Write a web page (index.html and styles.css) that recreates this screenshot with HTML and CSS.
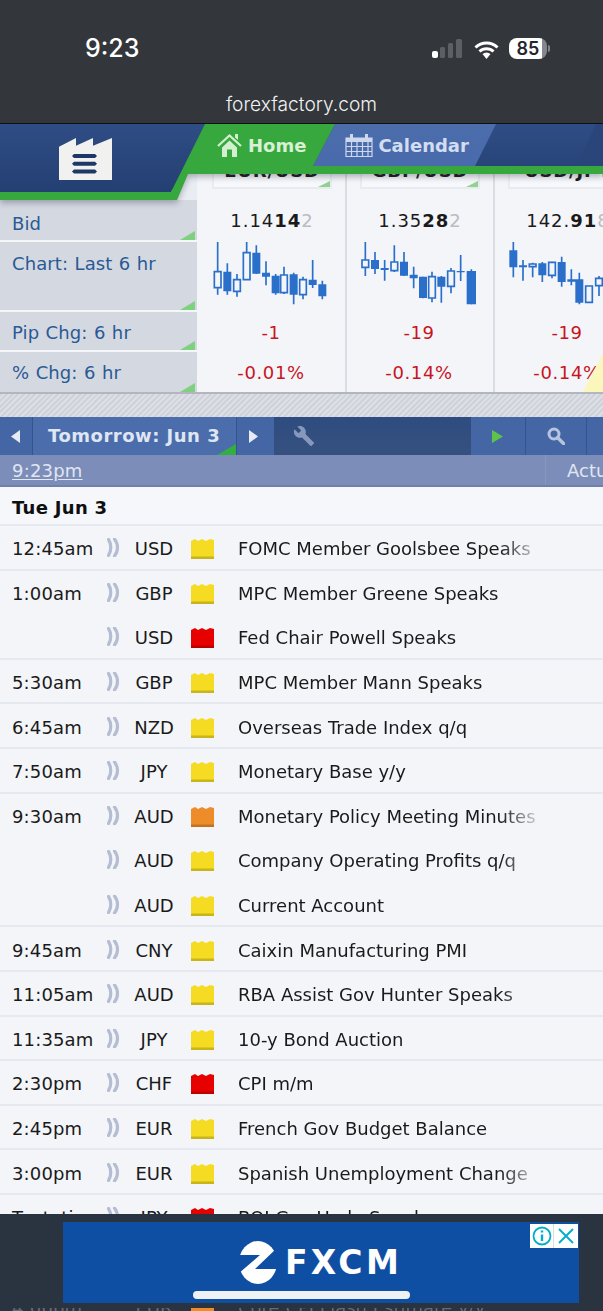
FILE: index.html
```html
<!DOCTYPE html>
<html lang="en">
<head>
<meta charset="utf-8">
<title>Forex Factory</title>
<link rel="stylesheet" href="styles.css">
</head>
<body>
<div class="page">
  <header class="browser">
    <div class="status">
      <span class="clock">9:23</span>
      <div class="status-icons">
        <svg class="signal" viewBox="0 0 30 19"><rect x="0" y="12" width="6" height="7" rx="2" fill="#fff"/><rect x="8" y="8" width="5" height="11" rx="1.5" fill="#5c5f63"/><rect x="16" y="4" width="5" height="15" rx="1.5" fill="#5c5f63"/><rect x="24" y="0" width="6" height="19" rx="1.5" fill="#5c5f63"/></svg>
        <svg class="wifi" viewBox="0 0 25 18"><path d="M1.500 6.500a15.500 15.500 0 0 1 22 0M5.500 10.500a10 10 0 0 1 14 0" fill="none" stroke="#fff" stroke-width="3"/><path d="M8.500 13a6 6 0 0 1 8 0L12.500 18z" fill="#fff"/></svg>
        <span class="battery">85</span>
      </div>
    </div>
    <div class="url">forexfactory.com</div>
  </header>

  <div class="stage">
    <nav class="nav">
      <svg class="nav-bg" viewBox="0 0 603 76">
        <defs>
          <linearGradient id="navblue" x1="0" y1="0" x2="0" y2="1"><stop offset="0" stop-color="#2f4d85"/><stop offset="1" stop-color="#243f72"/></linearGradient>
          <linearGradient id="tabblue" x1="0" y1="0" x2="0" y2="1"><stop offset="0" stop-color="#4b6dac"/><stop offset="1" stop-color="#4a6bab"/></linearGradient>
        </defs>
        <path d="M0 0H603V42H188L171 68H0Z" fill="url(#navblue)"/>
        <path d="M596 0H603V42H577Z" fill="#2a4579"/>
        <path d="M335 0H496L475 42H313Z" fill="url(#tabblue)"/>
        <path d="M205 0H335L313 42H603V50H188L177 76H0V68H171Z" fill="#36a83e"/>
      </svg>
      <div class="nav-row">
        <svg class="logo" viewBox="0 0 53 43">
          <path d="M0 9.700 17 1V8.700L34 1V8.700L53 1V43H0Z" fill="#f1f1ef"/>
          <path d="M13 19l2-2h21l2 2-2 2h-21z M13 26.700l2-2h21l2 2-2 2h-21z M13 34.500l2-2h21l2 2-2 2h-21z" fill="#1f3766"/>
        </svg>
        <a class="nav-link home">
          <svg class="ic-home" viewBox="0 0 25 23"><path d="M1 12 12.500 1.500 24 12" fill="none" stroke="#d3efd0" stroke-width="2.200"/><path d="M18 0h3v6l-3-2.500zM5 13.500 12.500 6.500 20 13.500V23H15V15.500H10V23H5Z" fill="#d3efd0"/></svg>
          Home
        </a>
        <a class="nav-link calendar">
          <svg class="ic-cal" viewBox="0 0 28 23"><path d="M1 4h26v18.500H1Z" fill="none" stroke="#cdd8ee" stroke-width="1.200"/><path d="M1 4h26v4H1ZM5 0h3v5H5ZM20 0h3v5h-3Z" fill="#cdd8ee"/><path d="M1 12.500h26M1 17.500h26M6.500 8v14M12 8v14M17.500 8v14M23 8v14" stroke="#cdd8ee" stroke-width="1.200"/></svg>
          Calendar
        </a>
      </div>
    </nav>

    <section class="markets">
      <div class="col side">
        <div class="r-head side-top"></div>
        <div class="r-bid label label-bid">Bid</div>
        <div class="r-chart label">Chart: Last 6 hr</div>
        <div class="r-pip label">Pip Chg: 6 hr</div>
        <div class="r-pct label">% Chg: 6 hr</div>
      </div>
      <div class="col cell">
        <div class="r-head"><div class="pair">EUR/USD</div></div>
        <div class="r-bid price">1.14<b>14</b><i>2</i></div>
        <div class="r-chart">
          <svg class="candles" viewBox="597 216 444 210">
            <path class="wick" d="M653 216V374M682 280V374M711 312V380M740 216V330M769 226V312M798 274V346M827 312V374M852 290V372M881 308V403M909 320V388M938 270V354M967 332V388"/>
            <path class="solid" d="M670 305h24v59h-24zM757 248h24v63h-24zM786 308h24v12h-24zM815 317h24v53h-24zM869 313h24v61h-24zM926 329h24v16h-24zM955 343h24v36h-24z"/>
            <path class="hollow" d="M643 305h20v48h-20zM701 329h20v35h-20zM730 248h20v81h-20zM842 315h20v53h-20zM899 329h20v45h-20z"/>
          </svg>
        </div>
        <div class="r-pip change">-1</div>
        <div class="r-pct change">-0.01%</div>
      </div>
      <div class="col cell">
        <div class="r-head"><div class="pair">GBP/USD</div></div>
        <div class="r-bid price">1.35<b>28</b><i>2</i></div>
        <div class="r-chart">
          <svg class="candles" viewBox="21 216 444 210">
            <path class="wick" d="M76 216V318M105 246V312M134 270V332M163 226V306M192 246V318M221 290V355M249 320V385M276 305V397M304 318V398M333 294V370M362 255V333M394 298V403"/>
            <path class="solid" d="M93 270h24v27h-24zM122 294h24v6h-24zM180 275h24v42h-24zM209 314h24v11h-24zM237 320h24v64h-24zM292 320h24v30h-24zM350 303h24v4h-24zM380 303h28v100h-28z"/>
            <path class="hollow" d="M66 270h20v22h-20zM153 276h20v26h-20zM266 320h20v64h-20zM323 303h20v46h-20z"/>
          </svg>
        </div>
        <div class="r-pip change">-19</div>
        <div class="r-pct change">-0.14%</div>
      </div>
      <div class="col cell">
        <div class="r-head"><div class="pair">USD/JPY</div></div>
        <div class="r-bid price">142.<b>91</b><i>8</i></div>
        <div class="r-chart">
          <svg class="candles" viewBox="465 216 444 210">
            <path class="wick" d="M520 216V322M549 270V332M578 278V322M607 276V336M636 275V325M665 260V350M694 298V346M718 308V403M747 348V397M777 318V378"/>
            <path class="solid" d="M508 241h24v51h-24zM537 286h24v6h-24zM595 280h24v36h-24zM653 276h24v60h-24zM682 328h24v7h-24zM706 328h24v70h-24z"/>
            <path class="hollow" d="M568 282h20v8h-20zM626 277h20v39h-20zM737 348h20v49h-20zM767 325h20v22h-20z"/>
          </svg>
        </div>
        <div class="r-pip change">-19</div>
        <div class="r-pct change">-0.14%</div>
      </div>
      <div class="note-peek"></div>
    </section>

    <div class="hatch"></div>

    <div class="toolbar">
      <button class="tb tb-arrow"><svg class="ic-arrow" viewBox="0 0 9 13"><path d="M9 0V13L0 6.500Z"/></svg></button>
      <div class="tb-tab">Tomorrow: Jun 3</div>
      <button class="tb tb-next"><svg class="ic-arrow" viewBox="0 0 9 13"><path d="M0 0V13L9 6.500Z"/></svg></button>
      <div class="tb-fill">
        <svg class="ic-wrench" viewBox="0 0 24 24"><path d="M22.700 19 13.600 9.900C14.500 7.600 14 4.900 12.100 3 10.100 1 7.100.6 4.700 1.700L9 6 6 9 1.600 4.700C.4 7.100.9 10.100 2.900 12.100 4.800 14 7.500 14.500 9.800 13.600L18.900 22.700c.4.400 1 .4 1.400 0l2.300-2.300c.5-.4.500-1.100.1-1.400z"/></svg>
      </div>
      <button class="tb tb-play"><svg class="ic-play" viewBox="0 0 12 13"><path d="M1 0 12 6.500 1 13Z"/></svg></button>
      <button class="tb tb-search"><svg class="ic-search" viewBox="0 0 18 18"><circle cx="7" cy="7" r="5" fill="none" stroke="#b7c4de" stroke-width="3"/><path d="M10.500 10.500 16.500 16.500" stroke="#b7c4de" stroke-width="3.400" stroke-linecap="round"/></svg></button>
      <button class="tb tb-end"></button>
    </div>

    <div class="timebar">
      <a class="now">9:23pm</a>
      <span class="actual">Actual</span>
    </div>

    <div class="day">Tue Jun 3</div>

    <svg class="defs" width="0" height="0">
      <defs>
        <symbol id="speaker" viewBox="0 0 13 19"><path d="M1.500 1.500C4.500 6 4.500 13 1.500 17.500M7.500 1C11.500 6 11.500 13 7.500 18" fill="none" stroke="#b4bdd2" stroke-width="3.200" stroke-linecap="round"/></symbol>
        <symbol id="impact" viewBox="0 0 23 21"><path d="M0 3 4 1 7 3 11 1 15 3 19 1 23 2V21H0Z"/><path d="M0 18.500H23V21H0Z" fill="#000" fill-opacity=".18"/></symbol>
      </defs>
    </svg>

    <div class="row"><span class="time">12:45am</span><svg class="spk"><use href="#speaker"/></svg><span class="cur">USD</span><svg class="imp yel"><use href="#impact"/></svg><span class="title">FOMC Member Goolsbee Speaks</span></div>
    <div class="row no-line"><span class="time">1:00am</span><svg class="spk"><use href="#speaker"/></svg><span class="cur">GBP</span><svg class="imp yel"><use href="#impact"/></svg><span class="title">MPC Member Greene Speaks</span></div>
    <div class="row"><span class="time"></span><svg class="spk"><use href="#speaker"/></svg><span class="cur">USD</span><svg class="imp red"><use href="#impact"/></svg><span class="title">Fed Chair Powell Speaks</span></div>
    <div class="row"><span class="time">5:30am</span><svg class="spk"><use href="#speaker"/></svg><span class="cur">GBP</span><svg class="imp yel"><use href="#impact"/></svg><span class="title">MPC Member Mann Speaks</span></div>
    <div class="row"><span class="time">6:45am</span><svg class="spk"><use href="#speaker"/></svg><span class="cur">NZD</span><svg class="imp yel"><use href="#impact"/></svg><span class="title">Overseas Trade Index q/q</span></div>
    <div class="row"><span class="time">7:50am</span><svg class="spk"><use href="#speaker"/></svg><span class="cur">JPY</span><svg class="imp yel"><use href="#impact"/></svg><span class="title">Monetary Base y/y</span></div>
    <div class="row no-line"><span class="time">9:30am</span><svg class="spk"><use href="#speaker"/></svg><span class="cur">AUD</span><svg class="imp ora"><use href="#impact"/></svg><span class="title">Monetary Policy Meeting Minutes</span></div>
    <div class="row no-line"><span class="time"></span><svg class="spk"><use href="#speaker"/></svg><span class="cur">AUD</span><svg class="imp yel"><use href="#impact"/></svg><span class="title">Company Operating Profits q/q</span></div>
    <div class="row"><span class="time"></span><svg class="spk"><use href="#speaker"/></svg><span class="cur">AUD</span><svg class="imp yel"><use href="#impact"/></svg><span class="title">Current Account</span></div>
    <div class="row"><span class="time">9:45am</span><svg class="spk"><use href="#speaker"/></svg><span class="cur">CNY</span><svg class="imp yel"><use href="#impact"/></svg><span class="title">Caixin Manufacturing PMI</span></div>
    <div class="row"><span class="time">11:05am</span><svg class="spk"><use href="#speaker"/></svg><span class="cur">AUD</span><svg class="imp yel"><use href="#impact"/></svg><span class="title">RBA Assist Gov Hunter Speaks</span></div>
    <div class="row"><span class="time">11:35am</span><svg class="spk"><use href="#speaker"/></svg><span class="cur">JPY</span><svg class="imp yel"><use href="#impact"/></svg><span class="title">10-y Bond Auction</span></div>
    <div class="row"><span class="time">2:30pm</span><svg class="spk"><use href="#speaker"/></svg><span class="cur">CHF</span><svg class="imp red"><use href="#impact"/></svg><span class="title">CPI m/m</span></div>
    <div class="row"><span class="time">2:45pm</span><svg class="spk"><use href="#speaker"/></svg><span class="cur">EUR</span><svg class="imp yel"><use href="#impact"/></svg><span class="title">French Gov Budget Balance</span></div>
    <div class="row"><span class="time">3:00pm</span><svg class="spk"><use href="#speaker"/></svg><span class="cur">EUR</span><svg class="imp yel"><use href="#impact"/></svg><span class="title">Spanish Unemployment Change</span></div>
    <div class="row"><span class="time">Tentative</span><svg class="spk"><use href="#speaker"/></svg><span class="cur">JPY</span><svg class="imp red"><use href="#impact"/></svg><span class="title">BOJ Gov Ueda Speaks</span></div>
    <div class="row"></div>
    <div class="row row-dim"><span class="time">4:00pm</span><span class="spk"></span><span class="cur">EUR</span><svg class="imp ora"><use href="#impact"/></svg><span class="title">Core CPI Flash Estimate y/y</span></div>

    <aside class="adbar">
      <div class="ad">
        <div class="ad-brand">
          <svg class="ad-mark" viewBox="0 0 38 43"><ellipse cx="19" cy="21.500" rx="19" ry="21.500" fill="#fff"/><path d="M-1 14H21L-1 33ZM39 6V28H16Z" fill="#0f4fa3"/></svg>
          <span class="ad-name">FXCM</span>
        </div>
        <div class="ad-controls">
          <span class="ad-info"><svg viewBox="0 0 20 20"><circle cx="10" cy="10" r="8.500" fill="none" stroke="#00aecd" stroke-width="1.800"/><path d="M10 8.500V15M10 4.500V6.500" stroke="#00aecd" stroke-width="2.400"/></svg></span>
          <span class="ad-close"><svg viewBox="0 0 18 18"><path d="M2 2 16 16M16 2 2 16" stroke="#00aecd" stroke-width="1.900"/></svg></span>
        </div>
        <div class="home-indicator"></div>
      </div>
    </aside>
  </div>
</div>
</body>
</html>
```
FILE: styles.css
```css
* { box-sizing: border-box; }
html, body { margin: 0; padding: 0; background: #f3f5f9; }
.page { width: 603px; height: 1311px; overflow: hidden; font-family: "DejaVu Sans", Verdana, sans-serif; font-size: 18px; color: #1a1a1a; }

/* browser chrome */
.browser { height: 124px; background: #33363a; border-bottom: 1px solid #0d0f12; color: #fff; font-family: Inter, "Liberation Sans", sans-serif; }
.status { height: 89px; display: flex; align-items: flex-start; justify-content: space-between; padding: 33px 56px 0 85px; }
.clock { font-size: 25px; line-height: 31px; font-weight: 500; }
.status-icons { display: flex; align-items: flex-start; padding-top: 5px; }
.signal { width: 30px; height: 19px; margin: 1px 12px 0 0; }
.wifi { width: 25px; height: 18px; margin-top: 3px; }
.battery { position: relative; width: 38px; height: 21px; margin-left: 10px; border-radius: 8px; background: linear-gradient(90deg, #fff 88%, #85878a 88%); color: #23262a; font-size: 18px; font-weight: 600; line-height: 21px; text-align: center; }
.battery::after { content: ""; position: absolute; right: -3px; top: 7px; width: 2px; height: 7px; border-radius: 0 2px 2px 0; background: #85878a; }
.url { text-align: center; font-size: 19.200px; line-height: 22px; color: #f0f1f2; font-weight: 300; margin-top: 4px; }

.stage { position: relative; }

/* nav overlay */
.nav { position: absolute; left: 0; top: 0; width: 603px; height: 76px; z-index: 5; }
.nav-bg { position: absolute; left: 0; top: 0; width: 603px; height: 76px; filter: drop-shadow(0 3px 3px rgba(40, 50, 70, .35)); overflow: visible; }
.nav-row { position: relative; display: flex; align-items: flex-start; }
.logo { width: 53px; height: 43px; margin: 13px 0 0 59px; }
.nav-link { display: flex; align-items: center; height: 42px; font-weight: 700; white-space: nowrap; }
.home { color: #d9f0d6; margin-left: 105px; }
.calendar { color: #d3ddf0; margin-left: 39px; }
.ic-home { width: 25px; height: 23px; margin-right: 6px; }
.ic-cal { width: 28px; height: 23px; margin-right: 5px; }

/* markets */
.markets { position: relative; display: grid; grid-template-columns: 199px 148px 148px 148px; height: 268px; overflow: hidden; background: #f3f5f9; }
.col { min-width: 0; }
.r-head { height: 76px; }
.r-bid { height: 42px; }
.r-chart { height: 70px; }
.r-pip { height: 40px; }
.r-pct { height: 40px; }
.side { border-right: 2px solid #f3f5f9; }
.side-top { background: #e9ecf2; }
.label { position: relative; background: #d4d8e1; border-bottom: 2px solid #f5f6f9; color: #2a5a94; padding: 10px 0 0 12px; line-height: 22px; word-spacing: .6px; letter-spacing: .1px; }
.label-bid { padding-top: 13px; }
.r-chart.label { padding-top: 11px; }
.r-pct.label { border-bottom: 0; }
.label::after { content: ""; position: absolute; right: 2px; bottom: 0; width: 15px; height: 9px; background: #7fd07f; clip-path: polygon(100% 0, 100% 100%, 0 100%); }
.cell { position: relative; border-right: 2px solid #d9dce3; }
.pair { position: relative; width: 120px; height: 65px; margin: 0 0 0 13px; padding-top: 36px; background: #f7f8fb; border: 2px solid #e9ebf1; border-top: 0; text-align: center; font-weight: 700; line-height: 22px; letter-spacing: .8px; white-space: nowrap; }
.pair::after { content: ""; position: absolute; right: 0; bottom: 0; width: 12px; height: 6px; background: #8fd38f; clip-path: polygon(100% 0, 100% 100%, 0 100%); }
.price { text-align: center; line-height: 42px; letter-spacing: 1px; white-space: nowrap; }
.price b { font-weight: 700; }
.price i { font-style: normal; color: #b9bcc2; }
.candles { display: block; width: 148px; height: 70px; overflow: visible; }
.wick { stroke: #2a6fc9; stroke-width: 5; fill: none; }
.solid { fill: #2a6fc9; }
.hollow { fill: #f3f5f9; stroke: #2a6fc9; stroke-width: 5; }
.change { color: #c8141e; text-align: center; line-height: 42px; letter-spacing: .6px; padding-right: 2px; }
.note-peek { position: absolute; right: 0; bottom: 0; width: 20px; height: 39px; background: #fbf6bc; clip-path: polygon(0 100%, 100% 0, 100% 100%); }

.hatch { height: 25px; border-top: 2px solid #b3b6bc; background: repeating-linear-gradient(135deg, #cfd2d9 0, #cfd2d9 2px, #dcdfe5 2px, #dcdfe5 4px); }

/* toolbar */
.toolbar { display: flex; height: 38px; background: #34507f; }
.tb { border: 0; padding: 0; margin: 0; height: 38px; background: #4566a4; display: flex; align-items: center; justify-content: center; }
.tb-arrow { width: 33px; border-right: 1px solid #35548e; padding-right: 1px; }
.tb-next { width: 37px; padding-right: 4px; }
.tb-tab { position: relative; width: 204px; padding-left: 15px; background: #4c6dac; border-right: 1px solid #35548e; color: #dfe6f3; font-weight: 700; letter-spacing: .5px; line-height: 38px; white-space: nowrap; }
.tb-tab::after { content: ""; position: absolute; right: 0; bottom: 0; width: 19px; height: 11px; background: #35ad45; clip-path: polygon(100% 0, 100% 100%, 0 100%); }
.ic-arrow { width: 9px; height: 13px; fill: #e6ebf4; }
.tb-fill { width: 197px; background: linear-gradient(#2f4c80, #36517f); padding: 8px 0 0 19px; }
.ic-wrench { display: block; width: 22px; height: 22px; fill: #8798bd; }
.tb-play { width: 55px; border-right: 1px solid #35548e; }
.ic-play { width: 12px; height: 13px; fill: #5fc34a; margin-right: 2px; }
.tb-search { width: 61px; border-right: 1px solid #35548e; }
.ic-search { width: 18px; height: 18px; }
.tb-end { flex: 1; }

/* time bar */
.timebar { display: flex; justify-content: space-between; height: 32px; background: #7b8db8; border-bottom: 2px solid #6f80ab; color: #e0e6f2; line-height: 32px; overflow: hidden; white-space: nowrap; }
.now { padding-left: 12px; text-decoration: underline; text-underline-offset: 2px; letter-spacing: .2px; }
.actual { width: 58px; padding-left: 21px; border-left: 1px solid #8797bd; overflow: hidden; }

.day { height: 39px; padding-left: 12px; font-weight: 700; line-height: 41px; letter-spacing: .3px; color: #0f0f0f; border-bottom: 2px solid #e6e9ef; background: #f5f7fb; }

.defs { position: absolute; }

/* event rows */
.row { display: flex; align-items: center; height: 44.600px; padding-top: 3px; border-bottom: 2px solid #e6e9ef; white-space: nowrap; background: #f3f5f9; }
.no-line { border-bottom-color: transparent; }
.time { width: 107px; flex: none; padding-left: 12px; letter-spacing: .15px; }
.spk { width: 13px; height: 19px; margin-top: -2px; flex: none; }
.cur { width: 68px; flex: none; text-align: center; }
.imp { width: 23px; height: 21px; margin-left: 3px; flex: none; }
.yel { fill: #f5dc22; }
.red { fill: #e60000; }
.ora { fill: #ef8c2a; }
.title { width: 302px; margin-left: 24px; overflow: hidden; -webkit-mask-image: linear-gradient(90deg, #000 87%, rgba(0,0,0,.25) 98%, transparent 100%); mask-image: linear-gradient(90deg, #000 87%, rgba(0,0,0,.25) 98%, transparent 100%); }
.row-dim { background: #2a3340; border-bottom: 0; color: #666c76; }

/* ad overlay */
.adbar { position: absolute; left: 0; top: 1090px; width: 603px; height: 94px; background: #2a3340; z-index: 6; padding: 8px 24px 0 63px; }
.ad { position: relative; height: 81px; background: #0f4fa3; display: flex; align-items: flex-start; justify-content: center; }
.ad-brand { display: flex; align-items: center; gap: 8px; margin: 19px 0 0 -1px; }
.ad-mark { width: 38px; height: 43px; }
.ad-name { color: #fff; font-weight: 700; font-size: 33px; line-height: 41px; letter-spacing: 3.300px; }
.ad-controls { position: absolute; right: 1px; top: 2px; display: flex; height: 24px; background: #fff; }
.ad-info, .ad-close { display: flex; align-items: center; justify-content: center; width: 24px; height: 24px; }
.ad-info { border-right: 1px solid #d9dee3; }
.ad-info svg { width: 20px; height: 20px; }
.ad-close svg { width: 18px; height: 18px; }
.home-indicator { position: absolute; left: 130px; bottom: 4px; width: 217px; height: 8px; border-radius: 4px; background: #eef2f5; }
```
